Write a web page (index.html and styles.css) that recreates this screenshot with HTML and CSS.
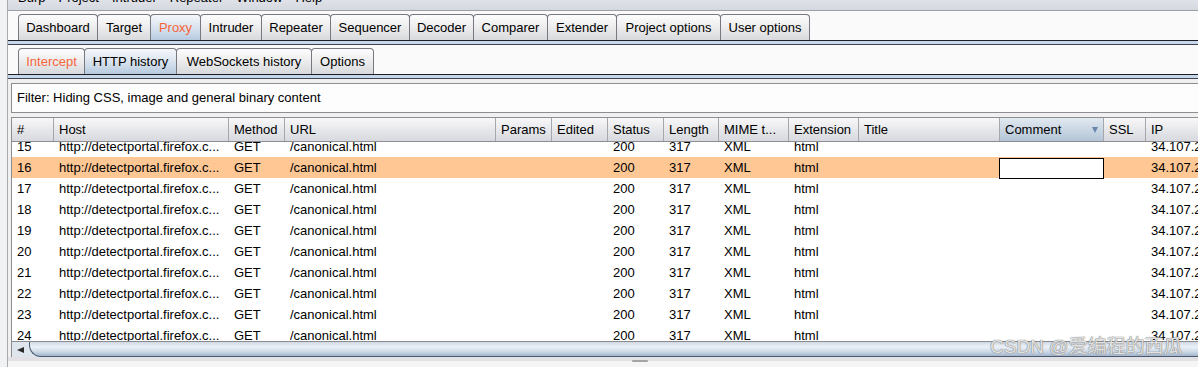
FILE: index.html
```html
<!DOCTYPE html>
<html>
<head>
<meta charset="utf-8">
<link rel="stylesheet" href="styles.css">
</head>
<body>
<div class="frame">
  <div class="side"></div>
  <div class="main">
    <div class="menubar"><span>Burp</span><span>Project</span><span>Intruder</span><span>Repeater</span><span>Window</span><span>Help</span></div>
    <div class="tabstrip">
      <div class="tab t-dash">Dashboard</div>
      <div class="tab t-target">Target</div>
      <div class="tab t-proxy on hot">Proxy</div>
      <div class="tab t-intruder">Intruder</div>
      <div class="tab t-repeater">Repeater</div>
      <div class="tab t-sequencer">Sequencer</div>
      <div class="tab t-decoder">Decoder</div>
      <div class="tab t-comparer">Comparer</div>
      <div class="tab t-extender">Extender</div>
      <div class="tab t-project">Project options</div>
      <div class="tab t-user">User options</div>
    </div>
    <div class="tabbar"></div>
    <div class="tabstrip">
      <div class="tab t-intercept hot">Intercept</div>
      <div class="tab t-history on">HTTP history</div>
      <div class="tab t-ws">WebSockets history</div>
      <div class="tab t-options">Options</div>
    </div>
    <div class="tabbar"></div>
    <div class="panel">
      <div class="filter">Filter: Hiding CSS, image and general binary content</div>
      <div class="table">
        <div class="thead">
          <div class="th">#</div>
          <div class="th">Host</div>
          <div class="th">Method</div>
          <div class="th">URL</div>
          <div class="th">Params</div>
          <div class="th">Edited</div>
          <div class="th">Status</div>
          <div class="th">Length</div>
          <div class="th">MIME t...</div>
          <div class="th">Extension</div>
          <div class="th">Title</div>
          <div class="th sorted">Comment<span class="caret"></span></div>
          <div class="th">SSL</div>
          <div class="th last">IP</div>
        </div>
        <div class="tbody">
          <div class="rows">
            <div class="row"><div class="td">15</div><div class="td">http://detectportal.firefox.c...</div><div class="td">GET</div><div class="td">/canonical.html</div><div class="td"></div><div class="td"></div><div class="td">200</div><div class="td">317</div><div class="td">XML</div><div class="td">html</div><div class="td"></div><div class="td"></div><div class="td"></div><div class="td">34.107.221.82</div></div>
            <div class="row sel"><div class="td">16</div><div class="td">http://detectportal.firefox.c...</div><div class="td">GET</div><div class="td">/canonical.html</div><div class="td"></div><div class="td"></div><div class="td">200</div><div class="td">317</div><div class="td">XML</div><div class="td">html</div><div class="td"></div><div class="td edit"></div><div class="td"></div><div class="td">34.107.221.82</div></div>
            <div class="row"><div class="td">17</div><div class="td">http://detectportal.firefox.c...</div><div class="td">GET</div><div class="td">/canonical.html</div><div class="td"></div><div class="td"></div><div class="td">200</div><div class="td">317</div><div class="td">XML</div><div class="td">html</div><div class="td"></div><div class="td"></div><div class="td"></div><div class="td">34.107.221.82</div></div>
            <div class="row"><div class="td">18</div><div class="td">http://detectportal.firefox.c...</div><div class="td">GET</div><div class="td">/canonical.html</div><div class="td"></div><div class="td"></div><div class="td">200</div><div class="td">317</div><div class="td">XML</div><div class="td">html</div><div class="td"></div><div class="td"></div><div class="td"></div><div class="td">34.107.221.82</div></div>
            <div class="row"><div class="td">19</div><div class="td">http://detectportal.firefox.c...</div><div class="td">GET</div><div class="td">/canonical.html</div><div class="td"></div><div class="td"></div><div class="td">200</div><div class="td">317</div><div class="td">XML</div><div class="td">html</div><div class="td"></div><div class="td"></div><div class="td"></div><div class="td">34.107.221.82</div></div>
            <div class="row"><div class="td">20</div><div class="td">http://detectportal.firefox.c...</div><div class="td">GET</div><div class="td">/canonical.html</div><div class="td"></div><div class="td"></div><div class="td">200</div><div class="td">317</div><div class="td">XML</div><div class="td">html</div><div class="td"></div><div class="td"></div><div class="td"></div><div class="td">34.107.221.82</div></div>
            <div class="row"><div class="td">21</div><div class="td">http://detectportal.firefox.c...</div><div class="td">GET</div><div class="td">/canonical.html</div><div class="td"></div><div class="td"></div><div class="td">200</div><div class="td">317</div><div class="td">XML</div><div class="td">html</div><div class="td"></div><div class="td"></div><div class="td"></div><div class="td">34.107.221.82</div></div>
            <div class="row"><div class="td">22</div><div class="td">http://detectportal.firefox.c...</div><div class="td">GET</div><div class="td">/canonical.html</div><div class="td"></div><div class="td"></div><div class="td">200</div><div class="td">317</div><div class="td">XML</div><div class="td">html</div><div class="td"></div><div class="td"></div><div class="td"></div><div class="td">34.107.221.82</div></div>
            <div class="row"><div class="td">23</div><div class="td">http://detectportal.firefox.c...</div><div class="td">GET</div><div class="td">/canonical.html</div><div class="td"></div><div class="td"></div><div class="td">200</div><div class="td">317</div><div class="td">XML</div><div class="td">html</div><div class="td"></div><div class="td"></div><div class="td"></div><div class="td">34.107.221.82</div></div>
            <div class="row"><div class="td">24</div><div class="td">http://detectportal.firefox.c...</div><div class="td">GET</div><div class="td">/canonical.html</div><div class="td"></div><div class="td"></div><div class="td">200</div><div class="td">317</div><div class="td">XML</div><div class="td">html</div><div class="td"></div><div class="td"></div><div class="td"></div><div class="td">34.107.221.82</div></div>
          </div>
        </div>
        <div class="hscroll"><div class="arrow"><span class="tri"></span></div><div class="thumb"></div></div>
      </div>
      <div class="bottom"><div class="grip"></div></div>
    </div>
  </div>
</div>
<div class="watermark">CSDN @爱编程的西瓜</div>
</body>
</html>
```

FILE: styles.css
```css
* { box-sizing: border-box; }
html, body { margin: 0; padding: 0; }
body {
  width: 1198px;
  height: 367px;
  overflow: hidden;
  position: relative;
  font-family: "Liberation Sans", Arial, sans-serif;
  font-size: 13px;
  color: #000;
  background: #fafafa;
}
.frame { display: flex; height: 367px; }
.side {
  width: 8px;
  flex: none;
  background: #f1f2f4;
  border-right: 1px solid #a9abb0;
}
.main {
  flex: 1;
  min-width: 0;
  display: flex;
  flex-direction: column;
  overflow: hidden;
  background: #fafafa;
}
.menubar {
  height: 11px;
  flex: none;
  display: flex;
  align-items: flex-start;
  gap: 13px;
  padding-left: 10px;
  line-height: 15px;
  overflow: hidden;
  border-bottom: 1px solid #9d9ea6;
  background: linear-gradient(#dfe2e8, #d4d8df);
}
.menubar span { margin-top: -10px; }
.tabstrip {
  height: 29px;
  flex: none;
  display: flex;
  align-items: flex-end;
  padding-left: 10px;
}
.tab {
  height: 26px;
  flex: none;
  display: flex;
  align-items: center;
  justify-content: center;
  margin-left: -1px;
  white-space: nowrap;
  border: 1px solid #767980;
  border-bottom: none;
  border-radius: 4px 4px 0 0;
  background: linear-gradient(#fdfdfd, #ececed 50%, #d8d9dc);
}
.tab:first-child { margin-left: 0; }
.tab.on { background: linear-gradient(#f5f7fa, #dde6f0 45%, #b6cadf); }
.tab.hot { color: #f7653b; }
.t-dash { width: 80px; }
.t-target { width: 54px; }
.t-proxy { width: 51px; }
.t-intruder { width: 62px; }
.t-repeater { width: 70px; }
.t-sequencer { width: 80px; }
.t-decoder { width: 65px; }
.t-comparer { width: 75px; }
.t-extender { width: 70px; }
.t-project { width: 105px; }
.t-user { width: 90px; }
.t-intercept { width: 67px; }
.t-history { width: 93px; }
.t-ws { width: 136px; }
.t-options { width: 63px; }
.tabbar {
  height: 5px;
  flex: none;
  border-top: 1px solid #1d1e28;
  border-bottom: 1px solid #3f4250;
  background: #c7d7ea;
}
.panel {
  flex: 1;
  min-height: 0;
  display: flex;
  flex-direction: column;
  padding: 4px 0 0 3px;
  background: #f0f0f0;
}
.filter {
  height: 30px;
  flex: none;
  padding-left: 5px;
  line-height: 28px;
  white-space: nowrap;
  margin-right: -2px;
  border: 1px solid #8e8e92;
  background: #fdfdfd;
}
.table {
  flex: none;
  width: 1300px;
  margin-top: 4px;
  border-left: 1px solid #8e8e92;
}
.thead, .row {
  display: grid;
  grid-template-columns: 42px 175px 56px 211px 56px 56px 56px 55px 70px 70px 141px 104px 42px 120px;
}
.thead {
  height: 25px;
  border-top: 1px solid #8e8e92;
  border-bottom: 1px solid #8e8e92;
  background: linear-gradient(#f8f8f9, #e7e8eb 50%, #d8d9de);
}
.th {
  position: relative;
  padding-left: 5px;
  line-height: 23px;
  white-space: nowrap;
  overflow: hidden;
  border-right: 1px solid #a6a7ac;
}
.th.last { border-right: none; }
.th.sorted { background: linear-gradient(#e2e9f1, #cad7e4 50%, #b4c5d7); }
.caret {
  position: absolute;
  right: 5px;
  top: 9px;
  width: 0;
  height: 0;
  border-left: 3.5px solid transparent;
  border-right: 3.5px solid transparent;
  border-top: 6px solid #6786aa;
}
.tbody {
  height: 199px;
  overflow: hidden;
  background: #fff;
}
.rows { margin-top: -6px; }
.row { height: 21px; line-height: 20px; }
.row.sel { background: #ffc794; }
.td {
  padding: 1px 0 0 5px;
  white-space: nowrap;
  overflow: hidden;
}
.td.edit {
  height: 21px;
  margin: 1px 0 0 -1px;
  border: 1px solid #000;
  background: #fff;
}
.hscroll {
  height: 16px;
  display: flex;
  border-top: 1px solid #8a8b90;
  background: #dfe5ec;
}
.arrow {
  width: 17px;
  flex: none;
  display: flex;
  align-items: center;
  justify-content: center;
}
.tri {
  width: 0;
  height: 0;
  border-top: 3px solid transparent;
  border-bottom: 3px solid transparent;
  border-right: 7px solid #2a2a2a;
}
.thumb {
  flex: 1;
  border-left: 1px solid #4a5a70;
  border-bottom: 1px solid #4a5a70;
  border-radius: 0 0 0 12px;
  background: linear-gradient(#d0d9e4, #ecf1f7 35%, #cbd8e6 70%, #a3b5ca);
}
.bottom {
  height: 10px;
  flex: none;
  margin-left: -3px;
  padding-top: 3px;
  background: linear-gradient(#e2e2e6 0 4px, #f5f5f5 4px);
}
.grip {
  width: 16px;
  height: 2px;
  margin-left: 624px;
  border-radius: 1px;
  background: #a3a3a6;
}
.watermark {
  position: absolute;
  left: 990px;
  top: 337px;
  font-family: "Liberation Sans", "Noto Sans CJK SC", sans-serif;
  font-size: 19px;
  line-height: 20px;
  white-space: nowrap;
  color: rgba(245, 245, 245, 0.85);
  text-shadow: 0 0 1px #777, 0 0 1px #777;
}
```
